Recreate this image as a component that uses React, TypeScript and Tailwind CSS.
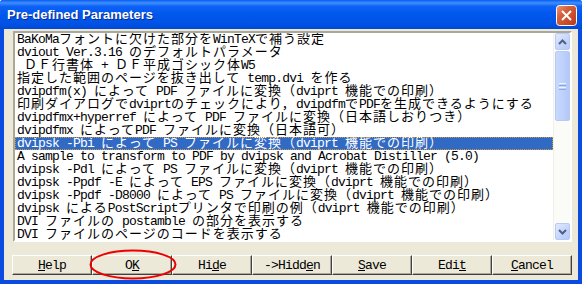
import React from 'react';

const rows = [
  'BaKoMaフォントに欠けた部分をWinTeXで補う設定',
  'dviout Ver.3.16 のデフォルトパラメータ',
  ' ＤＦ行書体 + ＤＦ平成ゴシック体W5',
  '指定した範囲のページを抜き出して temp.dvi を作る',
  'dvipdfm(x) によって PDF ファイルに変換（dviprt 機能での印刷）',
  '印刷ダイアログでdviprtのチェックにより，dvipdfmでPDFを生成できるようにする',
  'dvipdfmx+hyperref によって PDF ファイルに変換（日本語しおりつき）',
  'dvipdfmx によってPDF ファイルに変換（日本語可）',
  'dvipsk -Pbi によって PS ファイルに変換（dviprt 機能での印刷）',
  'A sample to transform to PDF by dvipsk and Acrobat Distiller (5.0)',
  'dvipsk -Pdl によって PS ファイルに変換（dviprt 機能での印刷）',
  'dvipsk -Ppdf -E によって EPS ファイルに変換（dviprt 機能での印刷）',
  'dvipsk -Ppdf -D8000 によって PS ファイルに変換（dviprt 機能での印刷）',
  'dvipsk によるPostScriptプリンタで印刷の例（dviprt 機能での印刷）',
  'DVI ファイルの postamble の部分を表示する',
  'DVI ファイルのページのコードを表示する',
];

// ascii runs get a narrow mono face (7px advance), the rest a CJK face (14px advance).
// both are 13px inline-blocks so the two fonts share one baseline
function Mixed({ text, u }: { text: string; u?: boolean }) {
  const parts = text.split(/([\x20-\x7e]+)/).filter(Boolean);
  const ul = u ? ' underline underline-offset-[1px]' : '';
  return (
    <>
      {parts.map((p, i) =>
        /^[\x20-\x7e]+$/.test(p) ? (
          <span key={i} className={"inline-block align-top h-[13px] leading-[13px] font-['Liberation_Mono',monospace] text-[13px] tracking-[-0.8px]" + ul}>{p}</span>
        ) : (
          <span key={i} className={"inline-block align-top h-[13px] leading-[9px] font-['Noto_Sans_CJK_JP',sans-serif] text-[13px] tracking-[1px]" + ul}>{p}</span>
        )
      )}
    </>
  );
}

function Chevron({ up }: { up?: boolean }) {
  return (
    <svg width="9" height="6" viewBox="0 0 9 6">
      <path d={up ? 'M1 5 L4.5 1.5 L8 5' : 'M1 1 L4.5 4.5 L8 1'} fill="none" stroke="#4d6185" strokeWidth="2" />
    </svg>
  );
}

function ScrollBar() {
  const btn = 'h-[17px] w-[15px] mx-[1px] rounded-[2px] border border-[#b7c9f5] bg-[linear-gradient(135deg,#e1eafe,#c3d4fc_60%,#b5c9f9)] flex items-center justify-center';
  return (
    <div className="w-[17px] h-full flex flex-col bg-[#fbfbf8] border-l border-[#f0efe9]">
      <div className={btn}>
        <Chevron up />
      </div>
      <div className="h-[70px] w-[15px] mx-[1px] mt-[1px] rounded-[2px] border border-[#b7c9f5] bg-[linear-gradient(90deg,#c9d8fd,#bcd0fb_60%,#b2c7f8)] flex flex-col items-center justify-center gap-[1px]">
        <div className="w-[7px] h-[1px] bg-[#eef3fe]" />
        <div className="w-[7px] h-[1px] bg-[#8ca8e8]" />
        <div className="w-[7px] h-[1px] bg-[#eef3fe]" />
        <div className="w-[7px] h-[1px] bg-[#8ca8e8]" />
      </div>
      <div className="flex-1" />
      <div className={btn}>
        <Chevron />
      </div>
    </div>
  );
}

const buttons: [string, string, string][] = [
  ['', 'H', 'elp'],
  ['O', 'K', ''],
  ['Hi', 'd', 'e'],
  ['->Hidd', 'e', 'n'],
  ['', 'S', 'ave'],
  ['Edi', 't', ''],
  ['', 'C', 'ancel'],
];

export default function App() {
  return (
    <div className="relative w-[582px] h-[284px] bg-[#0a4ce0] flex flex-col overflow-hidden rounded-t-[3px]">
      {/* title bar */}
      <div className="h-[29px] flex items-center justify-between pl-[7px] pr-[5px] bg-[linear-gradient(to_bottom,#0a5cf0,#3d8ffd_10%,#0e62f5_22%,#0057ec_50%,#0053e6_80%,#0049d6)]">
        <span className="font-['Liberation_Sans',sans-serif] font-bold text-[13px] text-white [text-shadow:1px_1px_0_#0b2a8e]">
          Pre-defined Parameters
        </span>
        <svg width="21" height="21" viewBox="0 0 21 21" className="mt-[1px]">
          <defs>
            <linearGradient id="cl" x1="0" y1="0" x2="1" y2="1">
              <stop offset="0" stopColor="#ec9a7e" />
              <stop offset="0.35" stopColor="#d7603c" />
              <stop offset="1" stopColor="#b8381a" />
            </linearGradient>
          </defs>
          <rect x="0.5" y="0.5" width="20" height="20" rx="3" fill="url(#cl)" stroke="#ffffff" />
          <path d="M6 6 L15 15 M15 6 L6 15" stroke="#ffffff" strokeWidth="2" />
        </svg>
      </div>

      {/* dialog body */}
      <div className="flex-1 ml-[4px] mr-[4px] mb-[4px] bg-[#ece9d8] flex flex-col pt-[2px]">
        <div className="ml-[9px] w-[559px] h-[211px] flex border-2 border-t-[#aca899] border-l-[#aca899] border-b-white border-r-white shadow-[inset_1px_1px_0_#716f64]">
          <div className="flex-1 bg-white overflow-hidden text-black">
            {rows.map((r, i) => (
              <div
                key={i}
                className={
                  'h-[13px] whitespace-pre pl-[2px] ' +
                  (i === 8 ? 'bg-[#316ac5] text-white outline-1 outline-dotted outline-offset-[-1px] outline-[#ce953a]' : '')
                }
              >
                <Mixed text={r} />
              </div>
            ))}
          </div>
          <ScrollBar />
        </div>

        <div className="ml-[8px] mt-[13px] flex">
          {buttons.map(([a, u, b], i) => (
            <div
              key={i}
              className="w-[80px] h-[20px] flex items-center justify-center bg-[#ece9d8] border border-t-white border-l-white border-r-[#404040] border-b-[#404040] shadow-[inset_-1px_-1px_0_#aca899] text-black whitespace-pre"
            >
              <Mixed text={a} />
              <Mixed text={u} u />
              <Mixed text={b} />
            </div>
          ))}
        </div>
      </div>

      {/* red highlight ellipse drawn over the OK button */}
      <svg className="absolute left-[89px] top-[249px]" width="88" height="32" viewBox="0 0 88 32">
        <ellipse cx="44" cy="15.5" rx="42.5" ry="14" fill="none" stroke="#ee0000" strokeWidth="2" />
      </svg>
    </div>
  );
}
